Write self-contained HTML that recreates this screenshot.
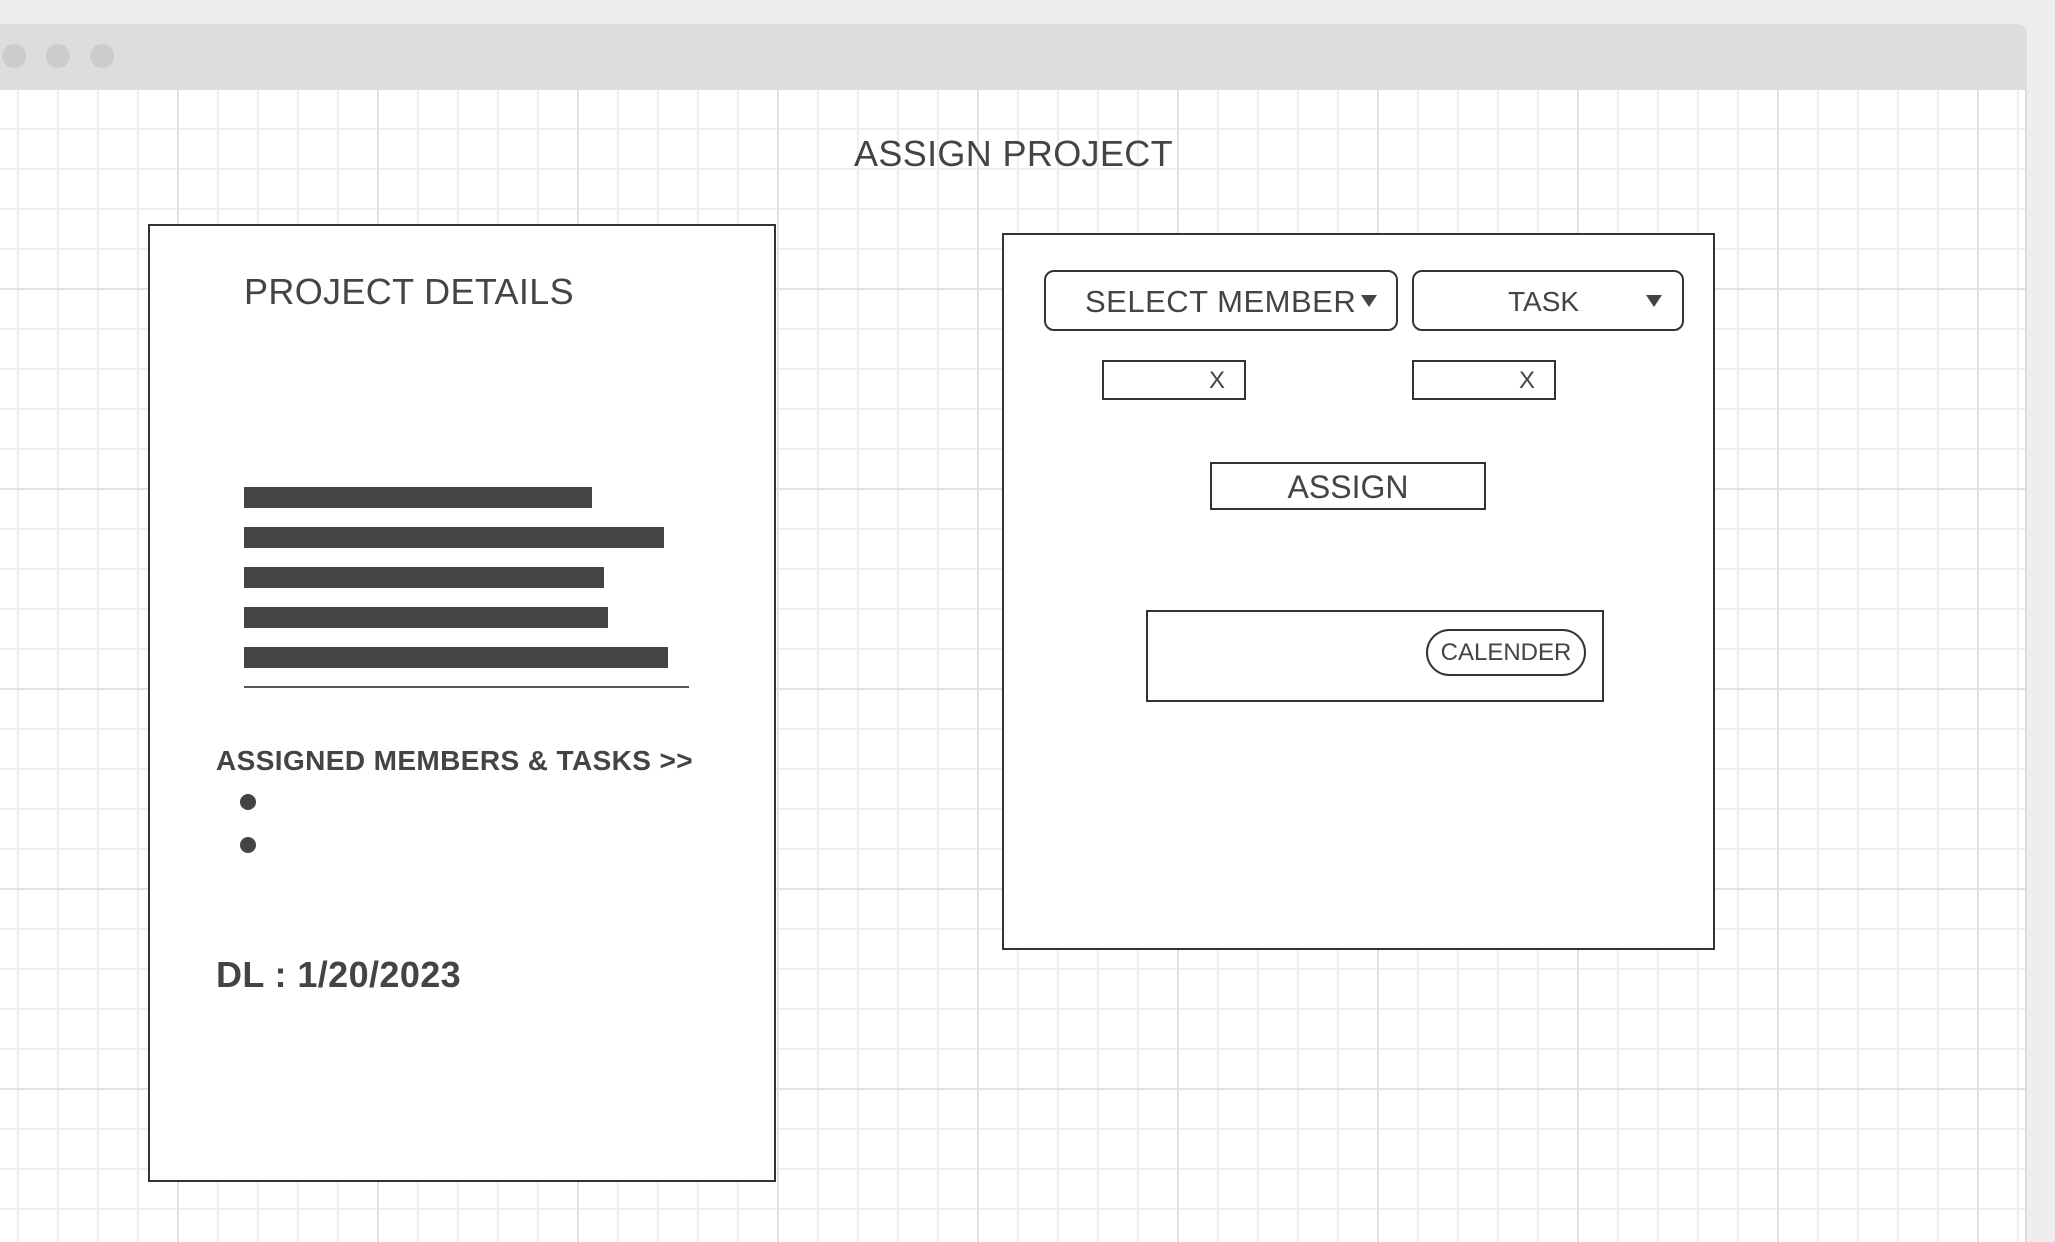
<!DOCTYPE html>
<html><head><meta charset="utf-8"><style>
*{margin:0;padding:0;box-sizing:border-box}
body{width:2055px;height:1242px;overflow:hidden;background:#eeeeee;position:relative;font-family:"Liberation Sans",sans-serif;color:#444}
.hdr{position:absolute;left:0;top:24px;width:2027px;height:66px;background:#dddddd;border-top-right-radius:10px}
.dot{position:absolute;top:44px;width:24px;height:24px;border-radius:50%;background:#cccccc}
.grid{position:absolute;left:0;top:90px;width:2027px;height:1152px;background-color:#fff;
background-image:
linear-gradient(to right,#e2e2e2 2px,transparent 2px),
linear-gradient(to bottom,#e2e2e2 2px,transparent 2px),
linear-gradient(to right,#eeeeee 2px,transparent 2px),
linear-gradient(to bottom,#eeeeee 2px,transparent 2px);
background-size:200px 200px,200px 200px,40px 40px,40px 40px;
background-position:177px 0,0 -2px,17px 0,0 38px;border-right:2px solid #ddd}
.a{position:absolute;white-space:nowrap}
.box{position:absolute;background:#fff;border:2px solid #333}
.bar{position:absolute;left:244px;height:21px;background:#444}
.bul{position:absolute;left:240px;width:16px;height:16px;border-radius:50%;background:#444}
.tri{position:absolute;width:0;height:0;border-left:8px solid transparent;border-right:8px solid transparent;border-top:12px solid #444}
</style></head><body>
<div class="hdr"></div>
<div class="dot" style="left:2px"></div>
<div class="dot" style="left:46px"></div>
<div class="dot" style="left:90px"></div>
<div class="grid"></div>

<div class="a" style="left:854px;top:134px;font-size:36px;line-height:40px;letter-spacing:0.35px">ASSIGN PROJECT</div>

<div class="box" style="left:148px;top:224px;width:628px;height:958px"></div>
<div class="a" style="left:244px;top:272px;font-size:36px;line-height:40px;letter-spacing:0.35px">PROJECT DETAILS</div>
<div class="bar" style="top:487px;width:348px"></div>
<div class="bar" style="top:527px;width:420px"></div>
<div class="bar" style="top:567px;width:360px"></div>
<div class="bar" style="top:607px;width:364px"></div>
<div class="bar" style="top:647px;width:424px"></div>
<div class="a" style="left:244px;top:686px;width:445px;height:2px;background:#555"></div>
<div class="a" style="left:216px;top:745px;font-size:28px;line-height:32px;font-weight:bold;letter-spacing:0.4px">ASSIGNED MEMBERS &amp; TASKS &gt;&gt;</div>
<div class="bul" style="top:794px"></div>
<div class="bul" style="top:837px"></div>
<div class="a" style="left:216px;top:954px;font-size:36px;line-height:42px;font-weight:bold;letter-spacing:0.4px">DL : 1/20/2023</div>

<div class="box" style="left:1002px;top:233px;width:713px;height:717px"></div>
<div class="box" style="left:1044px;top:270px;width:354px;height:61px;border-radius:10px"></div>
<div class="a" style="left:1085px;top:284px;font-size:31px;line-height:36px;letter-spacing:0.5px">SELECT MEMBER</div>
<div class="tri" style="left:1361px;top:295px"></div>
<div class="box" style="left:1412px;top:270px;width:272px;height:61px;border-radius:10px"></div>
<div class="a" style="left:1508px;top:284px;font-size:28px;line-height:36px">TASK</div>
<div class="tri" style="left:1646px;top:295px"></div>

<div class="box" style="left:1102px;top:360px;width:144px;height:40px"></div>
<div class="a" style="left:1209px;top:367px;font-size:24px;line-height:28px">X</div>
<div class="box" style="left:1412px;top:360px;width:144px;height:40px"></div>
<div class="a" style="left:1519px;top:367px;font-size:24px;line-height:28px">X</div>

<div class="box" style="left:1210px;top:462px;width:276px;height:48px"></div>
<div class="a" style="left:1210px;top:468px;width:276px;text-align:center;font-size:32px;line-height:38px">ASSIGN</div>

<div class="box" style="left:1146px;top:610px;width:458px;height:92px"></div>
<div class="box" style="left:1426px;top:629px;width:160px;height:47px;border-radius:24px"></div>
<div class="a" style="left:1426px;top:639px;width:160px;text-align:center;font-size:24px;line-height:28px">CALENDER</div>
</body></html>
